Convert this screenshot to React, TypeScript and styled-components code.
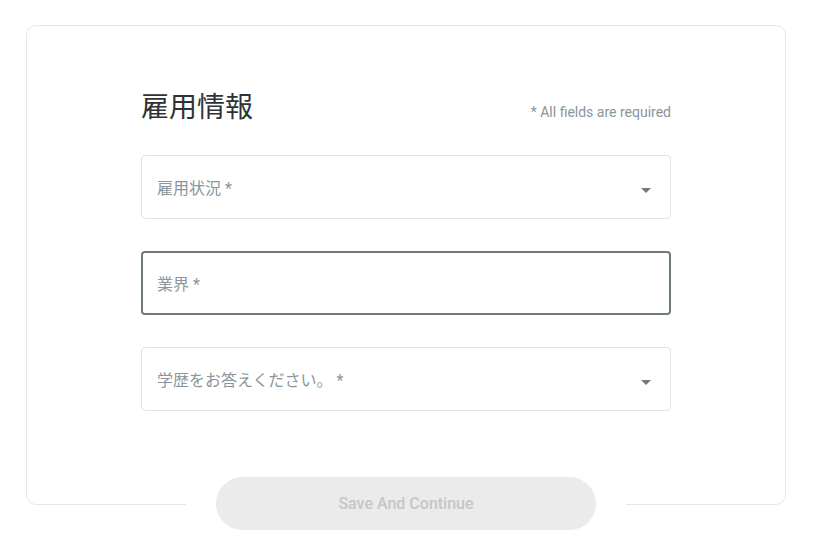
import styled, { createGlobalStyle } from 'styled-components'

const GlobalStyle = createGlobalStyle`
    * {
        box-sizing: border-box;
    }
    body {
        margin: 0;
        background: #ffffff;
        font-family: Roboto, "Noto Sans CJK JP", sans-serif;
    }
`

const Page = styled.div`
    padding: 25px 0 0 26px;
    height: 557px;
`

const Card = styled.section`
    width: 760px;
    border: 1px solid #e4e8eb;
    border-radius: 10px;
    padding-top: 65px;
    display: flex;
    flex-direction: column;
    align-items: center;
`

const Form = styled.div`
    width: 530px;
    display: flex;
    flex-direction: column;
`

const Header = styled.div`
    display: flex;
    justify-content: space-between;
    align-items: baseline;
    margin-bottom: 30px;
`

const Title = styled.h1`
    margin: 0;
    font-family: Roboto, "Noto Sans CJK JP", sans-serif;
    font-size: 28px;
    font-weight: 400;
    line-height: 34px;
    color: #2f3335;
`

const Required = styled.span`
    font-size: 14px;
    color: #89959a;
`

const Fields = styled.div`
    display: flex;
    flex-direction: column;
    gap: 32px;
`

const Field = styled.div<{ $focused?: boolean }>`
    height: 64px;
    display: flex;
    align-items: center;
    justify-content: space-between;
    padding: 0 ${props => props.$focused ? '18px' : '19px'} 0 ${props => props.$focused ? '14px' : '15px'};
    border: ${props => props.$focused ? '2px solid #6f7a7e' : '1px solid #dfe5e8'};
    border-radius: 4px;
    background: #ffffff;
`

const Label = styled.span`
    font-size: 16px;
    color: #8a969b;
`

const Arrow = styled.span`
    width: 0;
    height: 0;
    margin-top: 6px;
    border-left: 5px solid transparent;
    border-right: 5px solid transparent;
    border-top: 5px solid #6f7a7e;
`

const Footer = styled.div`
    margin-top: 66px;
    margin-bottom: -26px;
    padding: 0 30px;
    background: #ffffff;
`

const SaveButton = styled.button`
    width: 380px;
    height: 53px;
    border: none;
    border-radius: 27px;
    background: #ebebeb;
    color: #c6c6c6;
    font-family: Roboto, sans-serif;
    font-size: 16px;
    font-weight: 500;
    cursor: not-allowed;
`

const fields = [
    { label: '雇用状況 *', select: true },
    { label: '業界 *', focused: true },
    { label: '学歴をお答えください。 *', select: true },
]

const App = () => {
    return (
        <>
            <GlobalStyle />
            <Page>
                <Card>
                    <Form>
                        <Header>
                            <Title>雇用情報</Title>
                            <Required>* All fields are required</Required>
                        </Header>
                        <Fields>
                            {fields.map(field => (
                                <Field key={field.label} $focused={field.focused}>
                                    <Label>{field.label}</Label>
                                    {field.select && <Arrow />}
                                </Field>
                            ))}
                        </Fields>
                    </Form>
                    <Footer>
                        <SaveButton disabled>Save And Continue</SaveButton>
                    </Footer>
                </Card>
            </Page>
        </>
    )
}

export default App
